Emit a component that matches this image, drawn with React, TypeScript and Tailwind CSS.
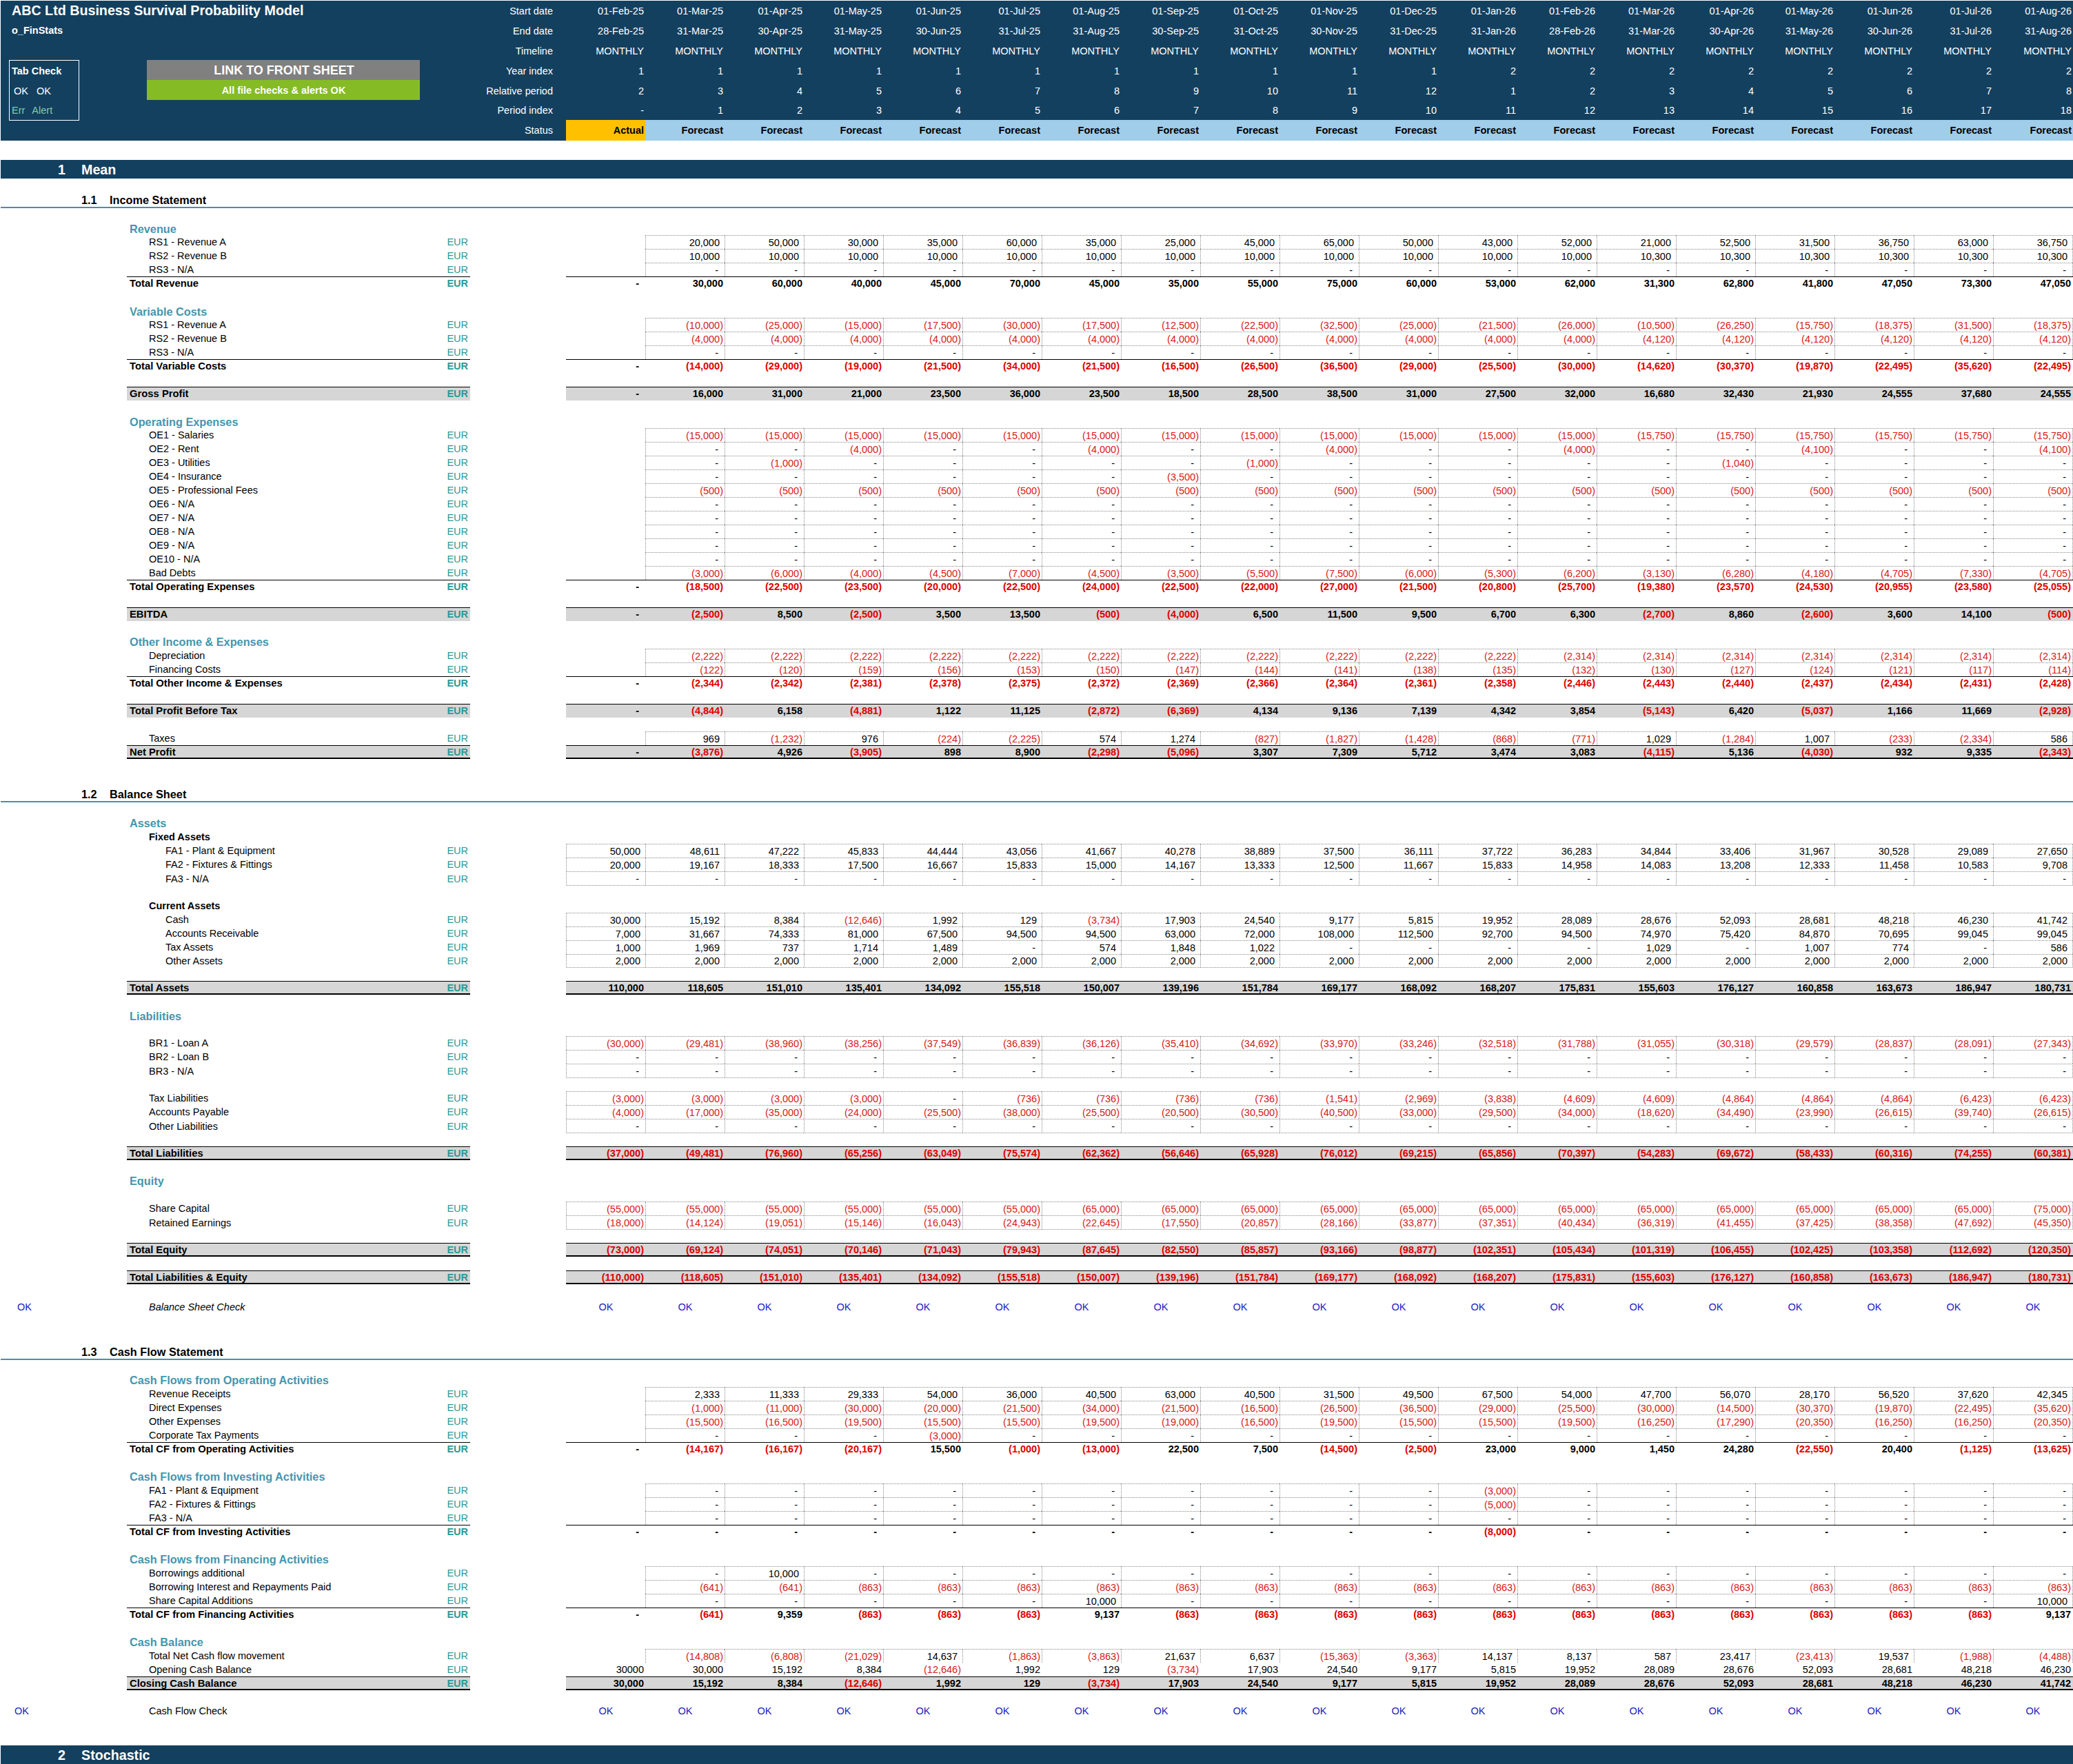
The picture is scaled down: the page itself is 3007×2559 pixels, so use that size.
const v = (s: string) => s.trim().split(/\s+/);
const rep = (x: string, n: number) => Array(n).fill(x);
const dashes = rep("-", 18);
const dashes19 = rep("-", 19);

const months = v("Feb-25 Mar-25 Apr-25 May-25 Jun-25 Jul-25 Aug-25 Sep-25 Oct-25 Nov-25 Dec-25 Jan-26 Feb-26 Mar-26 Apr-26 May-26 Jun-26 Jul-26 Aug-26");
const endDays = v("28 31 30 31 30 31 31 30 31 30 31 31 28 31 30 31 30 31 31");
const relPeriods = v("2 3 4 5 6 7 8 9 10 11 12 1 2 3 4 5 6 7 8");
const headerLabels = ["Start date", "End date", "Timeline", "Year index", "Relative period", "Period index", "Status"];

const headerHeights = ["h-[29px]", "h-[29px]", "h-[29px]", "h-[29px]", "h-[29px]", "h-[28px]", "h-[30px]"];

type Kind = "item" | "itemEnd" | "itemEndShort" | "plain" | "total" | "key" | "end";

const rowHeight: Record<Kind, string> = {
  item: "h-[20px]",
  itemEnd: "h-[21px]",
  itemEndShort: "h-[20px]",
  plain: "h-[20px]",
  total: "h-[20px]",
  key: "h-[20px]",
  end: "h-[20px]",
};

const blockStyle: Record<Kind, string> = {
  item: "",
  itemEnd: "",
  itemEndShort: "",
  plain: "",
  total: "border-t border-black font-bold pb-[1px]",
  key: "border-t border-black bg-[#d6d6d6] font-bold pb-[1px]",
  end: "border-t border-b-2 border-black bg-[#d6d6d6] font-bold",
};

const dottedStyle: Record<Kind, string> = {
  item: "border-l border-t border-dotted border-[#8a8a8a]",
  itemEnd: "border-l border-t border-b border-dotted border-[#8a8a8a]",
  itemEndShort: "border-l border-t border-b border-dotted border-[#8a8a8a]",
  plain: "border-transparent",
  total: "border-transparent",
  key: "border-transparent",
  end: "border-transparent",
};

const Num = ({ value, kind }: { value: string; kind: Kind }) => {
  const strong = kind === "total" || kind === "key" || kind === "end";
  if (value === "") return null;
  if (value === "-") return <span className="pr-[9px]">-</span>;
  if (value.startsWith("(")) return <span className={`pr-[2px] ${strong ? "text-[#e00000]" : "text-[#d81818]"}`}>{value}</span>;
  if (strong || kind === "plain") return <span className="pr-[2px]">{value}</span>;
  return <span className="pr-[7px]">{value}</span>;
};

const Row = ({ label, kind, values, deep }: { label: string; kind: Kind; values: string[]; deep?: boolean }) => {
  const strong = kind === "total" || kind === "key" || kind === "end";
  const cells = values.length === 18 ? [strong ? "-" : "", ...values] : values;
  return (
    <div className={`flex ${rowHeight[kind]}`}>
      <div className="w-[183px] shrink-0" />
      <div className={`w-[498px] shrink-0 flex items-center justify-between pr-[3px] ${blockStyle[kind]}`}>
        <span className={strong ? "pl-[4px] text-[14.8px]" : deep ? "pl-[56px]" : "pl-[32px]"}>{label}</span>
        <span className="text-[#2b9a96]">EUR</span>
      </div>
      <div className="w-[139px] shrink-0" />
      <div className={`flex-1 flex ${blockStyle[kind]}`}>
        {cells.map((c, i) => (
          <div
            key={i}
            className={`w-[115px] last:w-[116px] last:border-r flex items-center justify-end ${c === "" ? "border-transparent" : dottedStyle[kind]}`}
          >
            <Num value={c} kind={kind} />
          </div>
        ))}
      </div>
    </div>
  );
};

const Head = ({ label, low }: { label: string; low?: boolean }) => (
  <div className={`h-[20px] flex items-center pl-[187px] text-[16.3px] font-bold text-[#4596ae] ${low ? "pt-[1px]" : ""}`}>{label}</div>
);

const SubHead = ({ label }: { label: string }) => (
  <div className="h-[20px] flex items-center pl-[215px] font-bold">{label}</div>
);

const SectionBar = ({ no, label }: { no: string; label: string }) => (
  <div className="h-[27px] flex items-center bg-[#14405f] text-white text-[19.7px] font-bold">
    <span className="w-[117px] pl-[83px]">{no}</span>
    <span>{label}</span>
  </div>
);

const SubSection = ({ no, label, tall }: { no: string; label: string; tall?: boolean }) => (
  <div className={`${tall ? "h-[23px]" : "h-[22px]"} flex items-center border-b-2 border-[#4a90a2] text-[16.3px] font-bold`}>
    <span className="w-[158px] pl-[117px]">{no}</span>
    <span>{label}</span>
  </div>
);

const Check = ({ label, italic, left }: { label: string; italic?: boolean; left: string }) => (
  <div className="h-[20px] flex items-center">
    <div className={`w-[215px] shrink-0 text-[#2020c0] ${left}`}>OK</div>
    <div className={`w-[605px] shrink-0 ${italic ? "italic" : ""}`}>{label}</div>
    {rep("OK", 19).map((c, i) => (
      <div key={i} className="w-[115px] shrink-0 text-center pl-[1px] text-[#2020c0]">{c}</div>
    ))}
  </div>
);

const Header = () => (
  <div className="flex h-[203px] bg-[#14405f] text-white">
    <div className="w-[640px] shrink-0 flex flex-col">
      <div className="h-[29px] flex items-center pl-[16px] pb-[1px] text-[19.7px] font-bold">ABC Ltd Business Survival Probability Model</div>
      <div className="h-[29px] flex items-center pl-[16px] pb-[1px] font-bold">o_FinStats</div>
      <div className="h-[28px]" />
      <div className="flex items-start pl-[12px]">
        <div className="w-[102px] h-[88px] border border-white flex flex-col pl-[3px]">
          <div className="h-[29px] flex items-center font-bold">Tab Check</div>
          <div className="h-[29px] flex items-center gap-[12px] pl-[3px]">
            <span>OK</span>
            <span>OK</span>
          </div>
          <div className="h-[28px] flex items-center gap-[10px] text-[#80c9ad]">
            <span>Err</span>
            <span>Alert</span>
          </div>
        </div>
        <div className="w-[396px] ml-[98px] flex flex-col font-bold text-center">
          <div className="h-[29px] flex items-center justify-center pl-[2px] bg-[#808080] text-[18px]">LINK TO FRONT SHEET</div>
          <div className="h-[29px] flex items-center justify-center pl-[1px] bg-[#85bc26]">All file checks &amp; alerts OK</div>
        </div>
      </div>
    </div>
    <div className="w-[180px] shrink-0 flex flex-col items-end pr-[19px]">
      {headerLabels.map((l, i) => (
        <div key={l} className={`${headerHeights[i]} flex items-center`}>{l}</div>
      ))}
    </div>
    {months.map((m, i) => (
      <div key={m} className="w-[115px] last:w-[116px] shrink-0 flex flex-col items-stretch text-right">
        <div className="h-[29px] flex items-center justify-end pr-[2px]">01-{m}</div>
        <div className="h-[29px] flex items-center justify-end pr-[2px]">{endDays[i]}-{m}</div>
        <div className="h-[29px] flex items-center justify-end pr-[2px]">MONTHLY</div>
        <div className="h-[29px] flex items-center justify-end pr-[2px]">{i < 11 ? 1 : 2}</div>
        <div className="h-[29px] flex items-center justify-end pr-[2px]">{relPeriods[i]}</div>
        <div className="h-[28px] flex items-center justify-end pr-[2px]">{i === 0 ? "-" : i}</div>
        <div className={`h-[30px] flex items-center justify-end pr-[2px] font-bold text-black ${i === 0 ? "bg-[#ffc000]" : "bg-[#9fcdea]"}`}>
          {i === 0 ? "Actual" : "Forecast"}
        </div>
      </div>
    ))}
  </div>
);

const IncomeStatement = () => (
  <>
    <Head label="Revenue" low />
    <Row label="RS1 - Revenue A" kind="item" values={v("20,000 50,000 30,000 35,000 60,000 35,000 25,000 45,000 65,000 50,000 43,000 52,000 21,000 52,500 31,500 36,750 63,000 36,750")} />
    <Row label="RS2 - Revenue B" kind="item" values={[...rep("10,000", 12), ...rep("10,300", 6)]} />
    <Row label="RS3 - N/A" kind="item" values={dashes} />
    <Row label="Total Revenue" kind="total" values={v("30,000 60,000 40,000 45,000 70,000 45,000 35,000 55,000 75,000 60,000 53,000 62,000 31,300 62,800 41,800 47,050 73,300 47,050")} />
    <div className="h-[20px]" />
    <Head label="Variable Costs" low />
    <Row label="RS1 - Revenue A" kind="item" values={v("(10,000) (25,000) (15,000) (17,500) (30,000) (17,500) (12,500) (22,500) (32,500) (25,000) (21,500) (26,000) (10,500) (26,250) (15,750) (18,375) (31,500) (18,375)")} />
    <Row label="RS2 - Revenue B" kind="item" values={[...rep("(4,000)", 12), ...rep("(4,120)", 6)]} />
    <Row label="RS3 - N/A" kind="item" values={dashes} />
    <Row label="Total Variable Costs" kind="total" values={v("(14,000) (29,000) (19,000) (21,500) (34,000) (21,500) (16,500) (26,500) (36,500) (29,000) (25,500) (30,000) (14,620) (30,370) (19,870) (22,495) (35,620) (22,495)")} />
    <div className="h-[20px]" />
    <Row label="Gross Profit" kind="key" values={v("16,000 31,000 21,000 23,500 36,000 23,500 18,500 28,500 38,500 31,000 27,500 32,000 16,680 32,430 21,930 24,555 37,680 24,555")} />
    <div className="h-[20px]" />
    <Head label="Operating Expenses" low />
    <Row label="OE1 - Salaries" kind="item" values={[...rep("(15,000)", 12), ...rep("(15,750)", 6)]} />
    <Row label="OE2 - Rent" kind="item" values={v("- - (4,000) - - (4,000) - - (4,000) - - (4,000) - - (4,100) - - (4,100)")} />
    <Row label="OE3 - Utilities" kind="item" values={v("- (1,000) - - - - - (1,000) - - - - - (1,040) - - - -")} />
    <Row label="OE4 - Insurance" kind="item" values={v("- - - - - - (3,500) - - - - - - - - - - -")} />
    <Row label="OE5 - Professional Fees" kind="item" values={rep("(500)", 18)} />
    <Row label="OE6 - N/A" kind="item" values={dashes} />
    <Row label="OE7 - N/A" kind="item" values={dashes} />
    <Row label="OE8 - N/A" kind="item" values={dashes} />
    <Row label="OE9 - N/A" kind="item" values={dashes} />
    <Row label="OE10 - N/A" kind="item" values={dashes} />
    <Row label="Bad Debts" kind="item" values={v("(3,000) (6,000) (4,000) (4,500) (7,000) (4,500) (3,500) (5,500) (7,500) (6,000) (5,300) (6,200) (3,130) (6,280) (4,180) (4,705) (7,330) (4,705)")} />
    <Row label="Total Operating Expenses" kind="total" values={v("(18,500) (22,500) (23,500) (20,000) (22,500) (24,000) (22,500) (22,000) (27,000) (21,500) (20,800) (25,700) (19,380) (23,570) (24,530) (20,955) (23,580) (25,055)")} />
    <div className="h-[20px]" />
    <Row label="EBITDA" kind="key" values={v("(2,500) 8,500 (2,500) 3,500 13,500 (500) (4,000) 6,500 11,500 9,500 6,700 6,300 (2,700) 8,860 (2,600) 3,600 14,100 (500)")} />
    <div className="h-[20px]" />
    <Head label="Other Income & Expenses" />
    <Row label="Depreciation" kind="item" values={[...rep("(2,222)", 11), ...rep("(2,314)", 7)]} />
    <Row label="Financing Costs" kind="item" values={v("(122) (120) (159) (156) (153) (150) (147) (144) (141) (138) (135) (132) (130) (127) (124) (121) (117) (114)")} />
    <Row label="Total Other Income & Expenses" kind="total" values={v("(2,344) (2,342) (2,381) (2,378) (2,375) (2,372) (2,369) (2,366) (2,364) (2,361) (2,358) (2,446) (2,443) (2,440) (2,437) (2,434) (2,431) (2,428)")} />
    <div className="h-[20px]" />
    <Row label="Total Profit Before Tax" kind="key" values={v("(4,844) 6,158 (4,881) 1,122 11,125 (2,872) (6,369) 4,134 9,136 7,139 4,342 3,854 (5,143) 6,420 (5,037) 1,166 11,669 (2,928)")} />
    <div className="h-[20px]" />
    <Row label="Taxes" kind="item" values={v("969 (1,232) 976 (224) (2,225) 574 1,274 (827) (1,827) (1,428) (868) (771) 1,029 (1,284) 1,007 (233) (2,334) 586")} />
    <Row label="Net Profit" kind="end" values={v("(3,876) 4,926 (3,905) 898 8,900 (2,298) (5,096) 3,307 7,309 5,712 3,474 3,083 (4,115) 5,136 (4,030) 932 9,335 (2,343)")} />
  </>
);

const BalanceSheet = () => (
  <>
    <Head label="Assets" />
    <SubHead label="Fixed Assets" />
    <Row label="FA1 - Plant & Equipment" kind="item" deep values={v("50,000 48,611 47,222 45,833 44,444 43,056 41,667 40,278 38,889 37,500 36,111 37,722 36,283 34,844 33,406 31,967 30,528 29,089 27,650")} />
    <Row label="FA2 - Fixtures & Fittings" kind="item" deep values={v("20,000 19,167 18,333 17,500 16,667 15,833 15,000 14,167 13,333 12,500 11,667 15,833 14,958 14,083 13,208 12,333 11,458 10,583 9,708")} />
    <Row label="FA3 - N/A" kind="itemEnd" deep values={dashes19} />
    <div className="h-[19px]" />
    <SubHead label="Current Assets" />
    <Row label="Cash" kind="item" deep values={v("30,000 15,192 8,384 (12,646) 1,992 129 (3,734) 17,903 24,540 9,177 5,815 19,952 28,089 28,676 52,093 28,681 48,218 46,230 41,742")} />
    <Row label="Accounts Receivable" kind="item" deep values={v("7,000 31,667 74,333 81,000 67,500 94,500 94,500 63,000 72,000 108,000 112,500 92,700 94,500 74,970 75,420 84,870 70,695 99,045 99,045")} />
    <Row label="Tax Assets" kind="item" deep values={v("1,000 1,969 737 1,714 1,489 - 574 1,848 1,022 - - - - 1,029 - 1,007 774 - 586")} />
    <Row label="Other Assets" kind="itemEndShort" deep values={rep("2,000", 19)} />
    <div className="h-[19px]" />
    <Row label="Total Assets" kind="end" values={v("110,000 118,605 151,010 135,401 134,092 155,518 150,007 139,196 151,784 169,177 168,092 168,207 175,831 155,603 176,127 160,858 163,673 186,947 180,731")} />
    <div className="h-[21px]" />
    <Head label="Liabilities" />
    <div className="h-[19px]" />
    <Row label="BR1 - Loan A" kind="item" values={v("(30,000) (29,481) (38,960) (38,256) (37,549) (36,839) (36,126) (35,410) (34,692) (33,970) (33,246) (32,518) (31,788) (31,055) (30,318) (29,579) (28,837) (28,091) (27,343)")} />
    <Row label="BR2 - Loan B" kind="item" values={dashes19} />
    <Row label="BR3 - N/A" kind="itemEnd" values={dashes19} />
    <div className="h-[19px]" />
    <Row label="Tax Liabilities" kind="item" values={v("(3,000) (3,000) (3,000) (3,000) - (736) (736) (736) (736) (1,541) (2,969) (3,838) (4,609) (4,609) (4,864) (4,864) (4,864) (6,423) (6,423)")} />
    <Row label="Accounts Payable" kind="item" values={v("(4,000) (17,000) (35,000) (24,000) (25,500) (38,000) (25,500) (20,500) (30,500) (40,500) (33,000) (29,500) (34,000) (18,620) (34,490) (23,990) (26,615) (39,740) (26,615)")} />
    <Row label="Other Liabilities" kind="itemEnd" values={dashes19} />
    <div className="h-[19px]" />
    <Row label="Total Liabilities" kind="end" values={v("(37,000) (49,481) (76,960) (65,256) (63,049) (75,574) (62,362) (56,646) (65,928) (76,012) (69,215) (65,856) (70,397) (54,283) (69,672) (58,433) (60,316) (74,255) (60,381)")} />
    <div className="h-[20px]" />
    <Head label="Equity" />
    <div className="h-[20px]" />
    <Row label="Share Capital" kind="item" values={[...rep("(55,000)", 6), ...rep("(65,000)", 12), "(75,000)"]} />
    <Row label="Retained Earnings" kind="itemEnd" values={v("(18,000) (14,124) (19,051) (15,146) (16,043) (24,943) (22,645) (17,550) (20,857) (28,166) (33,877) (37,351) (40,434) (36,319) (41,455) (37,425) (38,358) (47,692) (45,350)")} />
    <div className="h-[19px]" />
    <Row label="Total Equity" kind="end" values={v("(73,000) (69,124) (74,051) (70,146) (71,043) (79,943) (87,645) (82,550) (85,857) (93,166) (98,877) (102,351) (105,434) (101,319) (106,455) (102,425) (103,358) (112,692) (120,350)")} />
    <div className="h-[20px]" />
    <Row label="Total Liabilities & Equity" kind="end" values={v("(110,000) (118,605) (151,010) (135,401) (134,092) (155,518) (150,007) (139,196) (151,784) (169,177) (168,092) (168,207) (175,831) (155,603) (176,127) (160,858) (163,673) (186,947) (180,731)")} />
    <div className="h-[23px]" />
    <Check label="Balance Sheet Check" italic left="pl-[24px]" />
  </>
);

const CashFlow = () => (
  <>
    <Head label="Cash Flows from Operating Activities" />
    <Row label="Revenue Receipts" kind="item" values={v("2,333 11,333 29,333 54,000 36,000 40,500 63,000 40,500 31,500 49,500 67,500 54,000 47,700 56,070 28,170 56,520 37,620 42,345")} />
    <Row label="Direct Expenses" kind="item" values={v("(1,000) (11,000) (30,000) (20,000) (21,500) (34,000) (21,500) (16,500) (26,500) (36,500) (29,000) (25,500) (30,000) (14,500) (30,370) (19,870) (22,495) (35,620)")} />
    <Row label="Other Expenses" kind="item" values={v("(15,500) (16,500) (19,500) (15,500) (15,500) (19,500) (19,000) (16,500) (19,500) (15,500) (15,500) (19,500) (16,250) (17,290) (20,350) (16,250) (16,250) (20,350)")} />
    <Row label="Corporate Tax Payments" kind="item" values={v("- - - (3,000) - - - - - - - - - - - - - -")} />
    <Row label="Total CF from Operating Activities" kind="total" values={v("(14,167) (16,167) (20,167) 15,500 (1,000) (13,000) 22,500 7,500 (14,500) (2,500) 23,000 9,000 1,450 24,280 (22,550) 20,400 (1,125) (13,625)")} />
    <div className="h-[20px]" />
    <Head label="Cash Flows from Investing Activities" />
    <Row label="FA1 - Plant & Equipment" kind="item" values={v("- - - - - - - - - - (3,000) - - - - - - -")} />
    <Row label="FA2 - Fixtures & Fittings" kind="item" values={v("- - - - - - - - - - (5,000) - - - - - - -")} />
    <Row label="FA3 - N/A" kind="item" values={dashes} />
    <Row label="Total CF from Investing Activities" kind="total" values={v("- - - - - - - - - - (8,000) - - - - - - -")} />
    <div className="h-[20px]" />
    <Head label="Cash Flows from Financing Activities" />
    <Row label="Borrowings additional" kind="item" values={v("- 10,000 - - - - - - - - - - - - - - - -")} />
    <Row label="Borrowing Interest and Repayments Paid" kind="item" values={["(641)", "(641)", ...rep("(863)", 16)]} />
    <Row label="Share Capital Additions" kind="item" values={v("- - - - - 10,000 - - - - - - - - - - - 10,000")} />
    <Row label="Total CF from Financing Activities" kind="total" values={["(641)", "9,359", "(863)", "(863)", "(863)", "9,137", ...rep("(863)", 11), "9,137"]} />
    <div className="h-[20px]" />
    <Head label="Cash Balance" />
    <Row label="Total Net Cash flow movement" kind="item" values={v("(14,808) (6,808) (21,029) 14,637 (1,863) (3,863) 21,637 6,637 (15,363) (3,363) 14,137 8,137 587 23,417 (23,413) 19,537 (1,988) (4,488)")} />
    <Row label="Opening Cash Balance" kind="plain" values={v("30000 30,000 15,192 8,384 (12,646) 1,992 129 (3,734) 17,903 24,540 9,177 5,815 19,952 28,089 28,676 52,093 28,681 48,218 46,230")} />
    <Row label="Closing Cash Balance" kind="end" values={v("30,000 15,192 8,384 (12,646) 1,992 129 (3,734) 17,903 24,540 9,177 5,815 19,952 28,089 28,676 52,093 28,681 48,218 46,230 41,742")} />
    <div className="h-[20px]" />
    <Check label="Cash Flow Check" left="pl-[20px]" />
  </>
);

export default function App() {
  return (
    <div className="w-[3007px] h-[2559px] overflow-hidden bg-white pl-[1px] pt-[1px] text-black text-[14.5px] leading-[20px] font-['Liberation_Sans',Arial,sans-serif]">
      <Header />
      <div className="h-[28px]" />
      <SectionBar no="1" label="Mean" />
      <div className="h-[21px]" />
      <SubSection no="1.1" label="Income Statement" />
      <div className="h-[19px]" />
      <IncomeStatement />
      <div className="h-[41px]" />
      <SubSection no="1.2" label="Balance Sheet" />
      <div className="h-[20px]" />
      <BalanceSheet />
      <div className="h-[44px]" />
      <SubSection no="1.3" label="Cash Flow Statement" tall />
      <div className="h-[19px]" />
      <CashFlow />
      <div className="h-[40px]" />
      <SectionBar no="2" label="Stochastic" />
    </div>
  );
}
